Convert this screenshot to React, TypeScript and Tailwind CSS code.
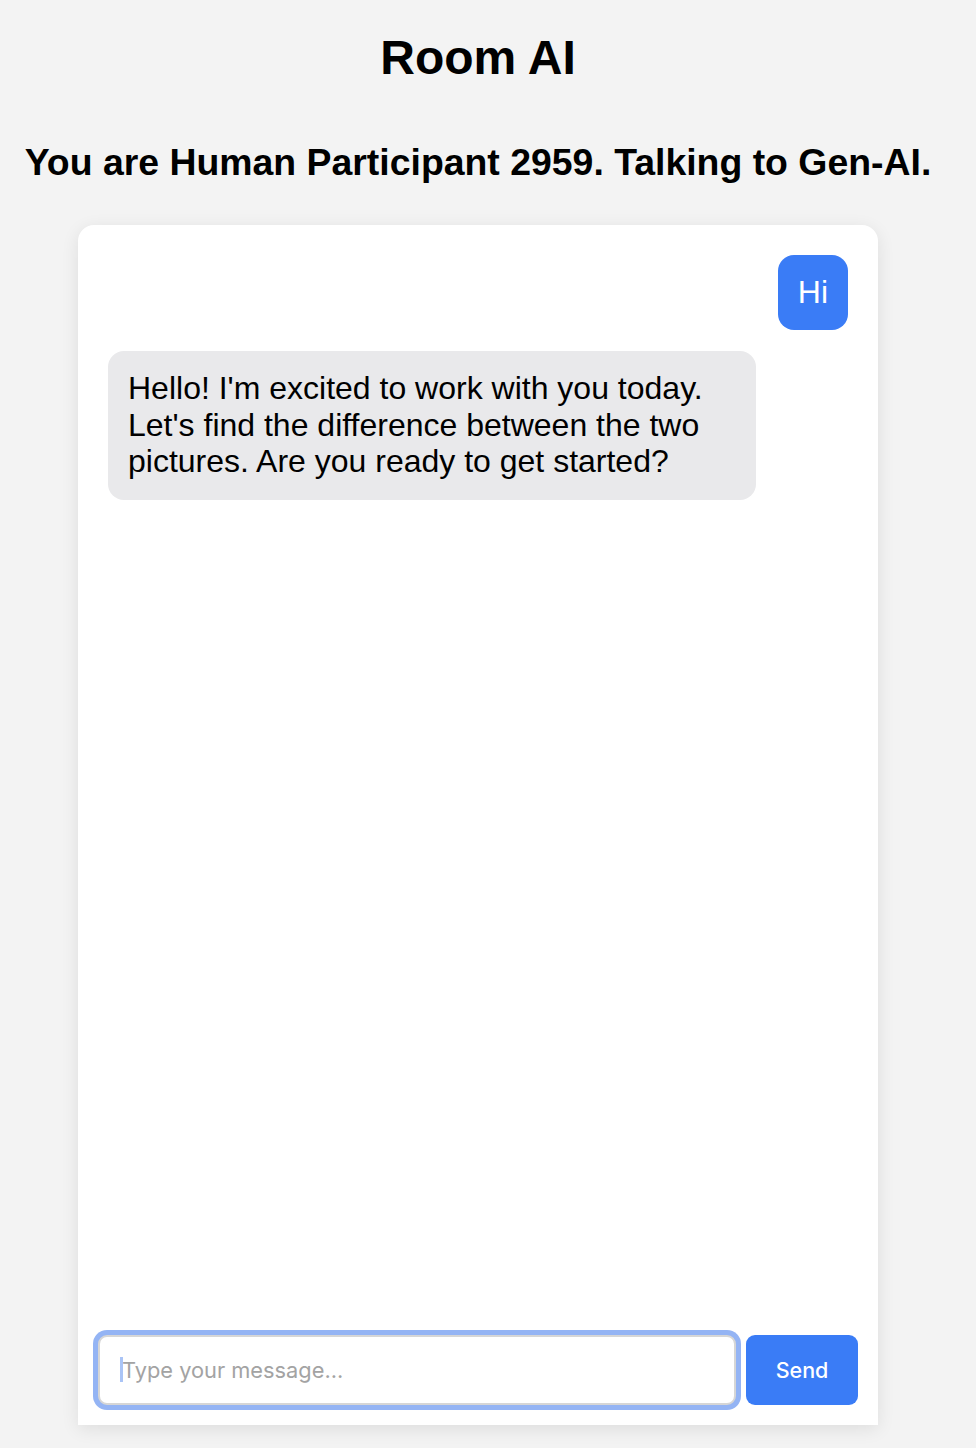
import React from "react";

export default function App() {
  return (
    <div className="min-h-screen w-full bg-[#f3f3f3]" style={{ fontFamily: '"Liberation Sans", Arial, sans-serif' }}>
      <div className="w-[956px] flex flex-col items-center">
        <h1 className="mt-[30px] text-[48px] leading-[55px] font-bold text-black">Room AI</h1>
        <h2 className="mt-[56px] text-[37.4px] leading-[42px] font-bold text-black">
          You are Human Participant 2959. Talking to Gen-AI.
        </h2>
        <div className="mt-[42px] w-[800px] h-[1200px] bg-white rounded-t-[16px] shadow-[0_4px_18px_rgba(0,0,0,0.09)] flex flex-col">
          <div className="flex-1 flex flex-col gap-[21px] px-[30px] pt-[30px]">
            <div className="self-end bg-[#3a7cf6] text-white text-[32px] leading-[36.5px] px-[20px] py-[19px] rounded-[16px]">
              Hi
            </div>
            <div className="self-start max-w-[648px] bg-[#e9e9eb] text-black text-[32px] leading-[36.5px] px-[20px] pt-[19.5px] pb-[20px] rounded-[16px]">
              Hello! I'm excited to work with you today. Let's find the difference between the two pictures. Are you ready to get started?
            </div>
          </div>
          <div className="flex gap-[10px] px-[20px] pb-[20px]" style={{ fontFamily: 'Inter, "Noto Sans", sans-serif' }}>
            <div className="relative flex-1">
              <input
                type="text"
                placeholder="Type your message..."
                className="w-full h-[70px] border-2 border-[#d6d6d6] rounded-[9px] pl-[22px] pr-[16px] text-[21.8px] text-black placeholder:text-[#a3a3a3] outline-none shadow-[0_0_0_5px_#94b4f4] bg-white"
              />
              <span className="absolute left-[22px] top-[22px] w-[3px] h-[25px] bg-[#aac4f6]" />
            </div>
            <button className="w-[112px] h-[70px] bg-[#3a7cf6] text-white text-[21.5px] font-medium rounded-[9px]">
              Send
            </button>
          </div>
        </div>
      </div>
    </div>
  );
}
